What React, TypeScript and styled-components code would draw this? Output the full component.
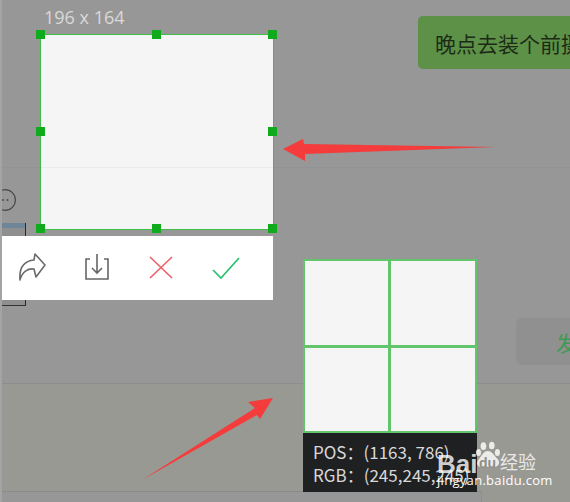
import styled, { createGlobalStyle } from "styled-components";

const CJK = `"Noto Sans CJK SC", "Open Sans", sans-serif`;

const GlobalStyles = createGlobalStyle`
  * {
    margin: 0;
    padding: 0;
    box-sizing: border-box;
  }
  body {
    background: #979797;
    overflow: hidden;
  }
`;

const handles: [string, string][] = [
  ["0%", "0%"],
  ["50%", "0%"],
  ["100%", "0%"],
  ["0%", "50%"],
  ["100%", "50%"],
  ["0%", "100%"],
  ["50%", "100%"],
  ["100%", "100%"],
];

export default function App() {
  return (
    <Page>
      <GlobalStyles />
      <Chat>
        <Bubble>晚点去装个前摄</Bubble>
      </Chat>
      <MessageArea>
        <LeftTools>
          <EmojiIcon viewBox="0 0 22 24">
            <circle cx="11" cy="12" r="10.4" />
            <circle className="dot" cx="9" cy="12" r="1" />
            <circle className="dot" cx="13.5" cy="12" r="1" />
          </EmojiIcon>
          <FileCard />
        </LeftTools>
        <SendButton>发送</SendButton>
      </MessageArea>
      <Editor />
      <BottomRow>
        <BottomBar />
      </BottomRow>

      <CaptureColumn>
        <SizeLabel>196 x 164</SizeLabel>
        <Selection>
          <SeamLine />
          {handles.map(([x, y]) => (
            <Handle key={x + y} $x={x} $y={y} />
          ))}
        </Selection>
        <Toolbar>
          <ToolIcon viewBox="0 0 28 32">
            <path
              d="M2 28C1 16 6 9 16 8L17 2L27 13L18 25L16 17C10 16 4 20 2 28Z"
              fill="none"
              stroke="#6a6a6a"
              strokeWidth="1.6"
              strokeLinejoin="round"
            />
          </ToolIcon>
          <ToolIcon viewBox="0 0 28 32">
            <path
              d="M7 7H3V27H25V7H21M14 2V21M9 16L14 21L19 16"
              fill="none"
              stroke="#666"
              strokeWidth="1.6"
            />
          </ToolIcon>
          <ToolIcon viewBox="0 0 28 32">
            <path
              d="M3 5L25 26M25 5L3 26"
              fill="none"
              stroke="#ee626a"
              strokeWidth="1.7"
            />
          </ToolIcon>
          <ToolIcon viewBox="0 0 28 32">
            <path
              d="M1 18L9 26L27 6"
              fill="none"
              stroke="#27c26c"
              strokeWidth="1.7"
            />
          </ToolIcon>
        </Toolbar>
      </CaptureColumn>

      <Magnifier>
        <MagnifierGrid>
          <MagnifierCell />
          <MagnifierCell />
          <MagnifierCell />
          <MagnifierCell />
        </MagnifierGrid>
        <PixelInfo>
          <PixelLine>POS：(1163, 786)</PixelLine>
          <PixelLine>RGB：(245,245,245)</PixelLine>
        </PixelInfo>
      </Magnifier>

      <ArrowLayer viewBox="0 0 570 502">
        <polygon
          points="283,149 303,139 304,144 495,147 305,154 305,161"
          fill="#f43c3c"
        />
        <polygon
          points="273,398 248,402 255,408 142,480 257,415 260,419"
          fill="#f43c3c"
        />
      </ArrowLayer>

      <Watermark>
        <WatermarkLogo>
          <BaiText>Bai</BaiText>
          <PawBadge>
            <Paw viewBox="0 0 40 42">
              <ellipse cx="12" cy="7" rx="4" ry="5.5" />
              <ellipse cx="24" cy="6" rx="4" ry="5.5" />
              <ellipse cx="5" cy="16" rx="3.6" ry="5" />
              <ellipse cx="32" cy="16" rx="3.6" ry="5" />
              <path d="M18 14C25 14 27 21 32 25C38 31 32 38 25 37C21 36 15 36 11 37C4 38 0 31 6 25C10 21 12 14 18 14Z" />
            </Paw>
            <DuText>du</DuText>
          </PawBadge>
          <JingyanText>经验</JingyanText>
        </WatermarkLogo>
        <UrlText>jingyan.baidu.com</UrlText>
      </Watermark>
    </Page>
  );
}

const Page = styled.div`
  position: relative;
  width: 570px;
  height: 502px;
  overflow: hidden;
  display: flex;
  flex-direction: column;
  border-left: 2px solid #a4a4a4;
  background: #979797;
  font-family: "Open Sans", sans-serif;
`;

const Chat = styled.section`
  flex: none;
  height: 168px;
  padding: 16px 0 0 416px;
  display: flex;
  align-items: flex-start;
  border-bottom: 1px solid #939393;
`;

const Bubble = styled.div`
  flex: none;
  height: 53px;
  padding: 0 17px;
  display: flex;
  align-items: center;
  background: #5c9147;
  border-radius: 5px;
  font-family: ${CJK};
  font-size: 21px;
  color: #1d2b16;
  white-space: nowrap;
`;

const MessageArea = styled.section`
  flex: none;
  height: 216px;
  display: flex;
  align-items: flex-start;
  background: #979797;
  border-bottom: 1px solid #8d8d89;
`;

const LeftTools = styled.div`
  flex: none;
  width: 24px;
  padding-top: 20px;
  display: flex;
  flex-direction: column;
  gap: 11px;
`;

const EmojiIcon = styled.svg`
  flex: none;
  width: 22px;
  height: 24px;
  margin-left: -8px;

  circle {
    fill: none;
    stroke: #4a4a4a;
    stroke-width: 1.2;
  }
  circle.dot {
    fill: #4a4a4a;
    stroke: none;
  }
`;

const FileCard = styled.div`
  flex: none;
  height: 83px;
  background: linear-gradient(#6f8698 0 5px, #8f8f8f 5px);
  border-right: 1px solid #2a2a2a;
  border-bottom: 1px solid #333;
`;

const SendButton = styled.div`
  flex: none;
  width: 110px;
  height: 47px;
  margin: 150px 0 0 490px;
  padding-left: 40px;
  display: flex;
  align-items: center;
  background: #909090;
  border-radius: 6px;
  font-family: ${CJK};
  font-size: 21px;
  color: #3d9a55;
  white-space: nowrap;
`;

const Editor = styled.section`
  flex: none;
  height: 107px;
  background: #999993;
`;

const BottomRow = styled.footer`
  flex: 1;
  background: #999993;
`;

const BottomBar = styled.div`
  width: 480px;
  height: 100%;
  background: #979797;
  border-top: 1px solid #8a8a88;
  border-right: 1px solid #8f8f8d;
`;

const CaptureColumn = styled.div`
  position: absolute;
  left: 0;
  top: 6px;
  width: 272px;
  display: flex;
  flex-direction: column;
`;

const SizeLabel = styled.div`
  height: 28px;
  padding-left: 42px;
  font-size: 18px;
  line-height: 22px;
  color: #d9d9d9;
`;

const Selection = styled.div`
  position: relative;
  margin-left: 38px;
  width: 234px;
  height: 196px;
  background: #f5f5f5;
  border: 1px solid #3fbf48;
`;

const SeamLine = styled.div`
  margin-top: 132px;
  height: 1px;
  background: #ececec;
`;

const Handle = styled.span<{ $x: string; $y: string }>`
  position: absolute;
  left: ${(p) => p.$x};
  top: ${(p) => p.$y};
  width: 9px;
  height: 9px;
  transform: translate(calc(-50% - 0.5px), calc(-50% - 0.5px));
  background: #10ab1d;
`;

const Toolbar = styled.div`
  margin-top: 6px;
  width: 271px;
  height: 64px;
  padding-left: 16px;
  display: flex;
  align-items: center;
  gap: 36.5px;
  background: #fff;
`;

const ToolIcon = styled.svg`
  flex: none;
  width: 28px;
  height: 32px;
  overflow: visible;
`;

const Magnifier = styled.div`
  position: absolute;
  left: 301px;
  top: 259px;
  width: 174px;
`;

const MagnifierGrid = styled.div`
  height: 174px;
  padding: 2px;
  display: grid;
  grid-template-columns: 83px 84px;
  grid-template-rows: 1fr 1fr;
  gap: 3px;
  background: #62c46b;
`;

const MagnifierCell = styled.div`
  background: #f5f5f5;
`;

const PixelInfo = styled.div`
  height: 59px;
  padding: 7px 0 0 10px;
  background: #1f2022;
`;

const PixelLine = styled.div`
  font-family: ${CJK};
  font-size: 17px;
  line-height: 23px;
  color: #d8d8d8;
  white-space: nowrap;
`;

const ArrowLayer = styled.svg`
  position: absolute;
  left: -2px;
  top: 0;
  width: 570px;
  height: 502px;
  pointer-events: none;
`;

const Watermark = styled.div`
  position: absolute;
  left: 435px;
  top: 441px;
  width: 110px;
  display: flex;
  flex-direction: column;
  color: rgba(255, 255, 255, 0.8);
`;

const WatermarkLogo = styled.div`
  display: flex;
  align-items: flex-end;
  height: 36px;
`;

const BaiText = styled.span`
  flex: none;
  width: 38px;
  font-family: "Liberation Sans", sans-serif;
  font-size: 26px;
  line-height: 26px;
  font-weight: 700;
`;

const PawBadge = styled.div`
  flex: none;
  align-self: flex-start;
  width: 28px;
  height: 30px;
  display: grid;
`;

const Paw = styled.svg`
  grid-area: 1 / 1;
  width: 28px;
  height: 30px;
  fill: rgba(255, 255, 255, 0.8);
`;

const DuText = styled.span`
  grid-area: 1 / 1;
  align-self: end;
  justify-self: center;
  margin-left: -3px;
  font-family: "Liberation Sans", sans-serif;
  font-size: 14px;
  line-height: 16px;
  font-weight: 700;
  color: #8f8f8a;
`;

const JingyanText = styled.span`
  flex: none;
  margin: 0 0 4px -3px;
  font-family: ${CJK};
  font-size: 18px;
  line-height: 24px;
`;

const UrlText = styled.div`
  margin-top: -5px;
  font-family: "Open Sans", sans-serif;
  font-size: 13px;
  line-height: 16px;
  letter-spacing: 0.3px;
  white-space: nowrap;
  color: #fff;
`;
